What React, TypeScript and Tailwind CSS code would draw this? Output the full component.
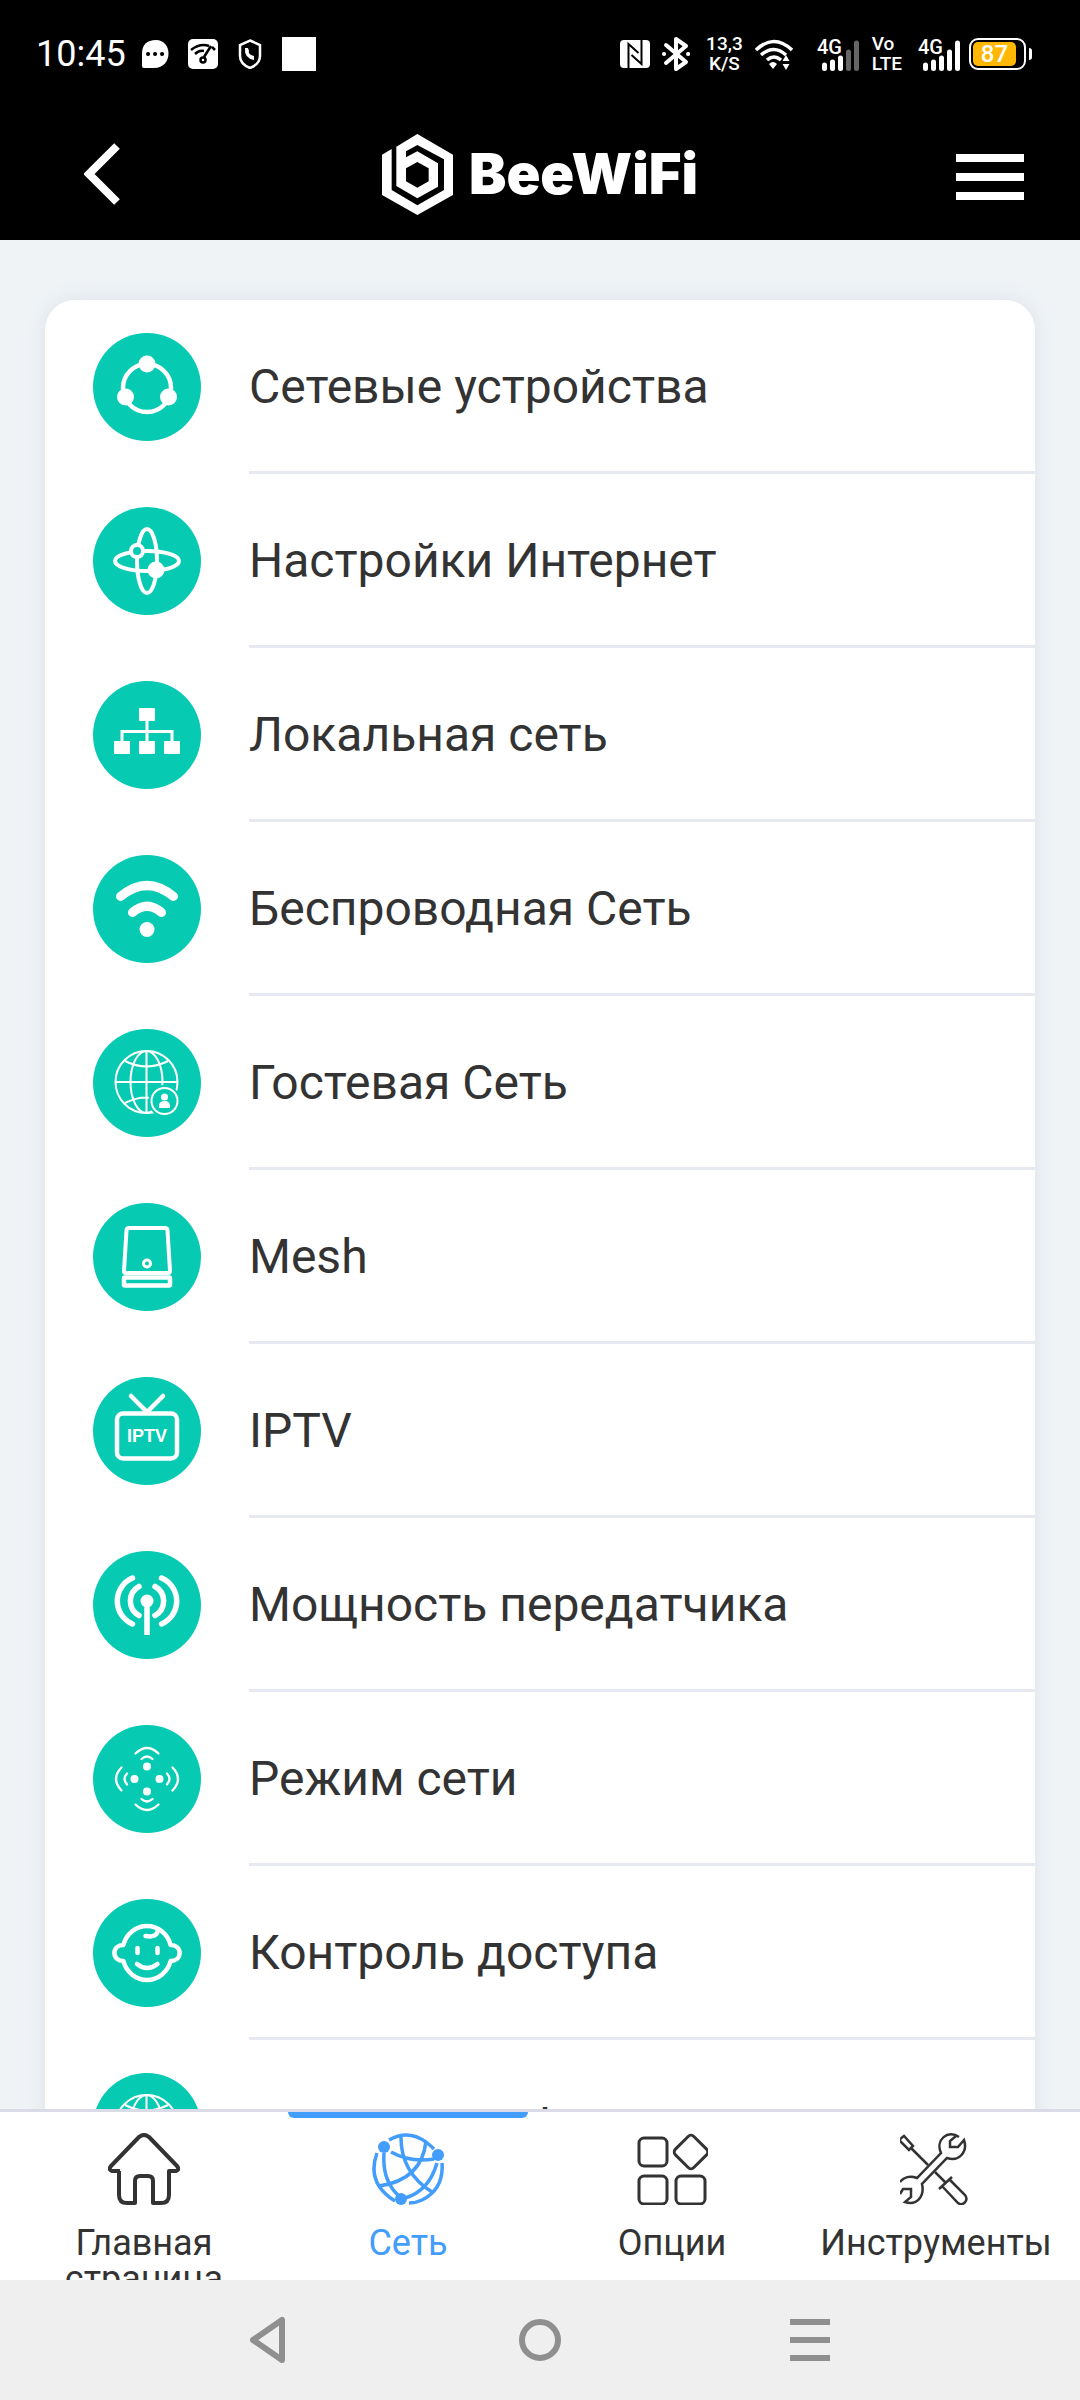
import type { ReactNode } from "react";

const TEAL = "#07cab3";

type SvgProps = {
  box: string;
  className: string;
  children: ReactNode;
};

function Svg({ box, className, children }: SvgProps) {
  return (
    <svg viewBox={box} className={`shrink-0 ${className}`} fill="none" stroke="currentColor" aria-hidden="true">
      {children}
    </svg>
  );
}

function Globe() {
  return (
    <g strokeWidth="2">
      <circle cx="53.5" cy="53" r="31" />
      <path d="M53.5 22v62M22.5 53h62M32 32q21.5 11 43 0M32 74q21.5-11 43 0" />
      <ellipse cx="53.5" cy="53" rx="16" ry="31" />
    </g>
  );
}

const items: { label: string; icon: ReactNode }[] = [
  {
    label: "Сетевые устройства",
    icon: (
      <>
        <circle cx="54" cy="55" r="24" strokeWidth="4.5" />
        <g fill="currentColor" stroke="none">
          <circle cx="54" cy="31" r="8.5" />
          <circle cx="32.5" cy="64" r="8.5" />
          <circle cx="75.5" cy="64" r="8.5" />
        </g>
      </>
    ),
  },
  {
    label: "Настройки Интернет",
    icon: (
      <>
        <ellipse cx="54" cy="54" rx="10" ry="32" strokeWidth="4" />
        <ellipse cx="54" cy="54" rx="32" ry="10" strokeWidth="4" />
        <circle cx="44" cy="44" r="6" strokeWidth="4" fill={TEAL} />
        <circle cx="63" cy="63" r="8.5" fill="currentColor" stroke="none" />
      </>
    ),
  },
  {
    label: "Локальная сеть",
    icon: (
      <>
        <path d="M54 38v24M29 62V50.5h50V62" strokeWidth="3" />
        <g fill="currentColor" stroke="none">
          <rect x="46" y="27" width="16" height="13" rx="1" />
          <rect x="21" y="60" width="16" height="13" rx="1" />
          <rect x="46" y="60" width="16" height="13" rx="1" />
          <rect x="71" y="60" width="16" height="13" rx="1" />
        </g>
      </>
    ),
  },
  {
    label: "Беспроводная Сеть",
    icon: (
      <>
        <path d="M27.5 41.5Q54 19.5 80.5 41.5M39.5 57.5Q54 45 68.5 57.5" strokeWidth="9" strokeLinecap="round" />
        <circle cx="54" cy="74.5" r="7.5" fill="currentColor" stroke="none" />
      </>
    ),
  },
  {
    label: "Гостевая Сеть",
    icon: (
      <>
        <Globe />
        <circle cx="71.5" cy="72" r="16" fill={TEAL} stroke="none" />
        <circle cx="71.5" cy="72" r="13" strokeWidth="2" />
        <g fill="currentColor" stroke="none">
          <circle cx="71.5" cy="68" r="3.5" />
          <path d="M66 79v-2q0-5 5.5-5t5.5 5v2z" />
        </g>
      </>
    ),
  },
  {
    label: "Mesh",
    icon: (
      <>
        <path d="M36 25h36q2.5 0 2.5 2.5L77 68q0 2-2 2H33q-2 0-2-2l2.5-40.5q0-2.5 2.5-2.5z" strokeWidth="4" />
        <rect x="31" y="74.5" width="46" height="8" rx="1" strokeWidth="4.5" />
        <circle cx="54" cy="60.5" r="3.5" strokeWidth="3" />
      </>
    ),
  },
  {
    label: "IPTV",
    icon: (
      <>
        <path d="M38 19l16 16 16-16" strokeWidth="4.5" strokeLinecap="round" />
        <rect x="24" y="36.5" width="60" height="45" rx="6" strokeWidth="4.5" />
        <text
          x="54"
          y="65"
          textAnchor="middle"
          fill="currentColor"
          stroke="none"
          className="font-['Liberation_Sans',sans-serif] text-[18px] font-bold"
        >
          IPTV
        </text>
      </>
    ),
  },
  {
    label: "Мощность передатчика",
    icon: (
      <>
        <path
          d="M39.5 27a25 25 0 0 0 0 46M68.5 27a25 25 0 0 1 0 46M46 35.5a16.5 16.5 0 0 0 0 29M62 35.5a16.5 16.5 0 0 1 0 29"
          strokeWidth="5.5"
          strokeLinecap="round"
        />
        <circle cx="54" cy="50" r="6.5" fill="currentColor" stroke="none" />
        <path d="M54 50v34" strokeWidth="5.5" />
      </>
    ),
  },
  {
    label: "Режим сети",
    icon: (
      <>
        {[0, 90, 180, 270].map((angle) => (
          <g key={angle} transform={`rotate(${angle} 54 54)`}>
            <circle cx="54" cy="41.5" r="4" fill="currentColor" stroke="none" />
            <path d="M48.5 34q5.5-5 11 0M42.5 28.5q11.5-11 23 0" strokeWidth="2.3" strokeLinecap="round" />
          </g>
        ))}
      </>
    ),
  },
  {
    label: "Контроль доступа",
    icon: (
      <>
        <path
          d="M30.4 46A24.5 26 0 0 1 77.6 46c5 0 9 3 9 8s-4 8-9 8A24.5 26 0 0 1 30.4 62c-5 0-9-3-9-8s4-8 9-8z"
          strokeWidth="4.5"
          strokeLinejoin="round"
        />
        <path d="M65 31q-1 8-12.5 6M44.5 49v5M64.5 49v5M44 65q10 8 20.5 0" strokeWidth="4.5" strokeLinecap="round" />
      </>
    ),
  },
  { label: "Входной трафик", icon: <Globe /> },
];

const tabs: { label: string; icon: ReactNode; active?: boolean }[] = [
  {
    label: "Главная страница",
    icon: (
      <path
        d="M12 38H4q-4-1-1-5L31 4q5-4 10 0l28 29q3 4-1 5h-7v24q0 8-8 8h-8V48q0-5-5-5h-8q-5 0-5 5v22h-8q-8 0-8-8V38"
        strokeWidth="4"
        strokeLinejoin="round"
      />
    ),
  },
  {
    label: "Сеть",
    active: true,
    icon: (
      <>
        <path
          d="M17 7Q36-4 54 9q5 4 8 7M70 30q2 26-20 37-6 3-13 3M23 68Q-6 50 5 20M29 2q-1 37 31 57M54 8Q50 47 7 53M19 19q20 11 43 7M12 20q-2 28 15 43M65 30q-8 28-32 35"
          strokeWidth="3.5"
        />
        <g fill="currentColor" stroke="none">
          <circle cx="12" cy="14" r="6" />
          <circle cx="66" cy="22" r="6" />
          <circle cx="29" cy="66" r="6" />
        </g>
      </>
    ),
  },
  {
    label: "Опции",
    icon: (
      <g strokeWidth="3">
        <rect x="3" y="5" width="28" height="28" rx="5" />
        <rect x="3" y="43" width="28" height="28" rx="5" />
        <rect x="40" y="43" width="29" height="28" rx="5" />
        <rect x="42" y="6" width="26" height="26" rx="4" transform="rotate(45 55 19)" />
      </g>
    ),
  },
  {
    label: "Инструменты",
    icon: (
      <g strokeWidth="2.5">
        <path d="M59 4c-11-8-24 3-18 16L17 45C9 42 3 45 0 49M0 61l3-5h8v8l-6 5c11 4 20-5 17-18l25-26c12 4 21-6 17-18l-6 7h-8V8l6-5" />
        <path d="M0 6l4-3 9 10-4 4-9-9zM11 15l17 17M35 39l11 11" />
        <path d="M52 44L39 56M42 53l16 17c5 4 11-3 7-8L49 46" />
      </g>
    ),
  },
];

function Signal({ strength }: { strength: number }) {
  return (
    <Svg box="0 0 43 34" className="h-[34px] w-[43px] overflow-visible">
      {[28, 25, 21, 15, 6].map((top, i) => (
        <path
          key={top}
          d={`M${7.5 + i * 8} ${top}V31.5`}
          strokeWidth="5"
          strokeLinecap="round"
          opacity={i < strength ? 1 : 0.4}
        />
      ))}
      <text x="0" y="17" fill="currentColor" stroke="none" className="text-[20px] font-medium">
        4G
      </text>
    </Svg>
  );
}

function StatusBar() {
  return (
    <div className="flex h-[108px] items-center justify-between pr-12 pl-9 text-white">
      <div className="flex items-center">
        <span className="text-[36px]">10:45</span>
        <Svg box="0 0 28 30" className="ml-4 h-[30px] w-[28px]">
          <path d="M14 1c17 0 17 28-2 28H2q-2 0-2-2V15Q0 1 14 1z" fill="currentColor" stroke="none" />
          <path d="M6 15h.1M13 15h.1M20 15h.1" stroke="#000" strokeWidth="4" strokeLinecap="round" />
        </Svg>
        <Svg box="0 0 30 30" className="ml-[18px] h-[30px] w-[30px]">
          <rect width="30" height="30" rx="5" fill="currentColor" stroke="none" />
          <path d="M3 11Q12 4 21 7M7 15q4-4 9-3M23 7l-7 11M24 8l3 3" stroke="#000" strokeWidth="2.5" />
          <circle cx="15" cy="21" r="2.5" stroke="#000" strokeWidth="2.5" />
        </Svg>
        <Svg box="0 0 24 30" className="ml-5 h-[30px] w-[24px]">
          <path d="M12 1.5L22 6v11q0 8-10 12Q2 25 2 17V6z" strokeWidth="2.5" />
          <path d="M7 9q-1 10 9 12v-4l-3-1q-3-2-2-4l-1-3z" fill="currentColor" stroke="none" />
        </Svg>
        <span className="ml-5 size-[34px] bg-white" />
      </div>

      <div className="flex items-center">
        <Svg box="0 0 30 28" className="h-[28px] w-[30px]">
          <rect width="30" height="28" rx="4" fill="currentColor" stroke="none" />
          <path d="M8.5 28V4l10 9M21.5 0v24l-10-9" stroke="#000" strokeWidth="2" />
        </Svg>
        <Svg box="0 0 28 36" className="ml-3 h-[36px] w-[28px]">
          <path d="M4 9l20 17-10 7V3l10 7L4 27" strokeWidth="4" strokeLinejoin="round" strokeLinecap="round" />
          <path d="M2 18h.1M26 18h.1" strokeWidth="4" strokeLinecap="round" />
        </Svg>
        <span className="ml-4 text-center text-[19px] leading-5 font-medium">
          13,3
          <br />
          K/S
        </span>
        <Svg box="0 0 38 32" className="ml-3 h-[32px] w-[38px]">
          <path d="M1 12Q19-5 37 12M6 17q13-11 25 0M12 22q7-6 14 0" strokeWidth="3.5" />
          <path d="M14 26q4-4 8 0l-4 5zM31 17l3.5 6h-7zM31 32l-3.5-6h7z" fill="currentColor" stroke="none" />
        </Svg>
        <span className="ml-6">
          <Signal strength={3} />
        </span>
        <span className="ml-3 text-[19px] leading-5 font-medium">
          Vo
          <br />
          LTE
        </span>
        <span className="ml-4">
          <Signal strength={5} />
        </span>
        <span className="ml-2 flex h-8 w-[57px] rounded-[9px] border-2 border-white p-[2px]">
          <span className="flex w-[43px] items-center justify-center rounded-[5px] bg-[#ffb703] text-[24px] leading-none font-medium">
            87
          </span>
        </span>
        <span className="ml-[3px] h-3 w-[3px] rounded-r-sm bg-white" />
      </div>
    </div>
  );
}

function Logo() {
  return (
    <div className="flex items-center gap-4 text-white">
      <Svg box="39 69 213 243" className="h-[81px] w-[71px]">
        <path
          d="M82 107L145 69L252 131V252L145 312L39 252V131L68 114V237L145 283L225 237V145L145 102L111 121V139L145 121L207 157V227L145 262L82 225ZM145 153L179 172V211L145 230L111 211V172Z"
          fill="currentColor"
          fillRule="evenodd"
          stroke="none"
        />
      </Svg>
      <span className="font-[Inter,sans-serif] text-[56px] leading-none font-black">BeeWiFi</span>
    </div>
  );
}

function Header() {
  return (
    <header className="flex h-[132px] items-center justify-between px-14 text-white">
      <button aria-label="Назад" className="flex w-[68px] justify-center">
        <Svg box="0 0 36 62" className="ml-6 h-[62px] w-[36px]">
          <path d="M33 3L5 31l28 28" strokeWidth="8" />
        </Svg>
      </button>
      <Logo />
      <button aria-label="Меню">
        <Svg box="0 0 68 52" className="h-[52px] w-[68px]">
          <path d="M0 10h68M0 29h68M0 48h68" strokeWidth="8" />
        </Svg>
      </button>
    </header>
  );
}

function MenuItem({ label, icon }: { label: string; icon: ReactNode }) {
  return (
    <li>
      <a href="#" className="flex h-[174px] pl-12">
        <span className="mt-[33px] mr-12 size-[108px] shrink-0 rounded-full bg-[#07cab3] text-white">
          <Svg box="0 0 108 108" className="size-full">
            {icon}
          </Svg>
        </span>
        <span className="flex flex-1 items-center border-b-3 border-[#e6eaf0] pt-[3px] text-[48px]">{label}</span>
      </a>
    </li>
  );
}

function TabBar() {
  return (
    <nav className="grid h-[171px] shrink-0 grid-cols-4 overflow-hidden border-t-3 border-[#dadbe6] bg-white px-3">
      {tabs.map(({ label, icon, active }) => (
        <a
          key={label}
          href="#"
          className={`relative flex flex-col items-center gap-5 pt-[21px] text-center text-[36px] leading-9 ${
            active ? "text-[#429dfc]" : ""
          }`}
        >
          {active && <span className="absolute inset-x-3 top-0 h-[6px] rounded-b-[6px] bg-[#429dfc]" />}
          <Svg box="0 0 72 72" className="size-[72px]">
            {icon}
          </Svg>
          <span className="px-3">{label}</span>
        </a>
      ))}
    </nav>
  );
}

function SystemBar() {
  return (
    <div className="grid h-[120px] shrink-0 grid-cols-3 place-items-center bg-[#efefef] px-[12.5%] text-[#8f8f8f]">
      <button aria-label="Назад">
        <Svg box="0 0 40 48" className="h-12 w-10">
          <path d="M32 4v40L3 24z" strokeWidth="6" strokeLinejoin="round" />
        </Svg>
      </button>
      <button aria-label="Домой">
        <Svg box="0 0 42 42" className="size-[42px]">
          <circle cx="21" cy="21" r="18" strokeWidth="6" />
        </Svg>
      </button>
      <button aria-label="Последние приложения">
        <Svg box="0 0 40 42" className="h-[42px] w-10">
          <path d="M0 3h40M0 21h40M0 39h40" strokeWidth="6" />
        </Svg>
      </button>
    </div>
  );
}

export default function App() {
  return (
    <div className="flex h-screen flex-col bg-[#eff3f6] font-[Roboto,sans-serif] text-[#333]">
      <div className="shrink-0 bg-black">
        <StatusBar />
        <Header />
      </div>
      <main className="min-h-0 flex-1 overflow-hidden px-[45px] pt-[60px]">
        <ul className="overflow-hidden rounded-[30px] bg-white shadow-[0_0_20px_#dde2e9]">
          {items.map((item) => (
            <MenuItem key={item.label} {...item} />
          ))}
        </ul>
      </main>
      <TabBar />
      <SystemBar />
    </div>
  );
}
